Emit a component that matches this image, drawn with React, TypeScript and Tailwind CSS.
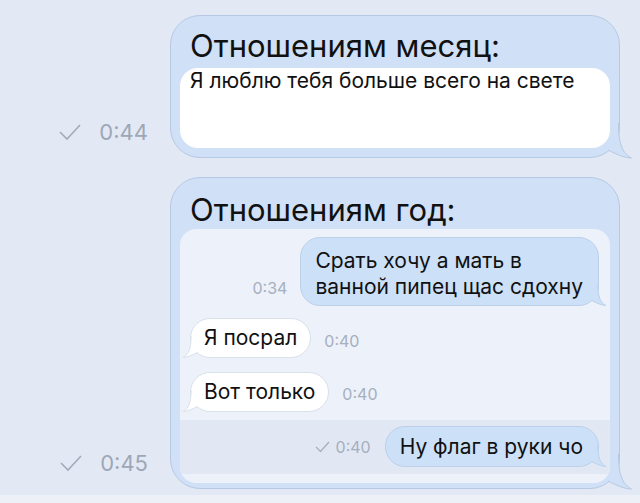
import React from 'react';

// bubble tail, drawn over the bottom corner of a bubble
const Tail: React.FC<{ side: 'left' | 'right'; size: 'big' | 'small'; fill: string; stroke: string }> = ({ side, size, fill, stroke }) => {
  const box =
    size === 'big'
      ? 'absolute -right-[13px] -bottom-[2px] w-[40px] h-[36px]'
      : side === 'right'
      ? 'absolute -right-[8px] -bottom-[1px] w-[24px] h-[22px]'
      : 'absolute -left-[8px] -bottom-[1px] w-[24px] h-[22px]';
  const flip = side === 'left' ? 'translate(40,0) scale(-1,1)' : undefined;
  return (
    <svg className={box} viewBox="0 0 40 36" preserveAspectRatio="none">
      <g transform={flip}>
        <path d="M26.5 0 C26.5 20 30 30 39.5 35 C33 35 26 32 16 27 L10 10 L20 0 Z" fill={fill} />
        <path d="M26.5 0 C26.5 20 30 30 39.5 35 C33 35 26 32 16 27" fill="none" stroke={stroke} strokeWidth={1} vectorEffect="non-scaling-stroke" />
      </g>
    </svg>
  );
};

const BigCheck = () => (
  <svg width="22" height="18" viewBox="0 0 22 18" fill="none">
    <path d="M1 9 L8 16 L21 2" stroke="#a3abb9" strokeWidth={1.6} />
  </svg>
);

const SmallCheck = () => (
  <svg width="15" height="12" viewBox="0 0 15 12" fill="none">
    <path d="M1 6 L5.5 10.5 L14 1" stroke="#a9b1be" strokeWidth={1.3} />
  </svg>
);

const Stamp: React.FC<{ time: string }> = ({ time }) => (
  <div className="flex items-center gap-[18px] text-[22px] leading-[26px] text-[#9ea7b6]">
    <BigCheck />
    <span>{time}</span>
  </div>
);

const SentBubble: React.FC<{ children: React.ReactNode; className?: string }> = ({ children, className }) => (
  <div className={`relative rounded-[20px] border border-[#bcd0ea] bg-[#cce0f7] ${className ?? ''}`}>
    <Tail side="right" size="small" fill="#cce0f7" stroke="#bcd0ea" />
    <span className="relative">{children}</span>
  </div>
);

const InBubble: React.FC<{ children: React.ReactNode }> = ({ children }) => (
  <div className="relative h-[40px] rounded-[20px] border border-[#d9e0ea] bg-white px-[13px] leading-[38px]">
    <Tail side="left" size="small" fill="#ffffff" stroke="#d9e0ea" />
    <span className="relative">{children}</span>
  </div>
);

export default function App() {
  return (
    <div className="w-[640px] h-[503px] overflow-hidden bg-[#e3e9f4] flex flex-col font-['Inter',sans-serif] text-[#111]">
      {/* month */}
      <div className="flex mt-[15px]">
        <div className="w-[170px] shrink-0 flex justify-end items-end pr-[22px] pb-[13px]">
          <Stamp time="0:44" />
        </div>
        <div className="relative w-[450px] rounded-[30px] border border-[#b6c9e4] bg-[#cfe0f7] px-[9px] pb-[9px]">
          <Tail side="right" size="big" fill="#cfe0f7" stroke="#b6c9e4" />
          <div className="relative pt-[12px] pl-[10px] text-[31px] leading-[36px]">Отношениям месяц:</div>
          <div className="relative mt-[4px] h-[80px] rounded-[18px] bg-white pl-[10px] pt-[1px] text-[21px] leading-[24px]">
            Я люблю тебя больше всего на свете
          </div>
        </div>
      </div>

      {/* year */}
      <div className="flex mt-[19px]">
        <div className="w-[170px] shrink-0 flex justify-end items-end pr-[22px] pb-[13px]">
          <Stamp time="0:45" />
        </div>
        <div className="relative w-[450px] rounded-[30px] border border-[#b6c9e4] bg-[#cfe0f7] px-[9px] pb-[5px]">
          <Tail side="right" size="big" fill="#cfe0f7" stroke="#b6c9e4" />
          <div className="relative pt-[14px] pl-[10px] text-[31px] leading-[36px]">Отношениям год:</div>
          <div className="relative mt-[1px] rounded-[16px] bg-[#ecf1fa] pt-[8px] pb-[9px] overflow-hidden text-[21px]">
            <div className="flex justify-end items-end gap-[13px] pr-[11px]">
              <span className="mb-[10px] text-[16px] leading-[16px] text-[#a6afbe]">0:34</span>
              <SentBubble className="pl-[14px] pr-[15px] pt-[10px] pb-[5px] leading-[26px]">
                Срать хочу а мать в<br />ванной пипец щас сдохну
              </SentBubble>
            </div>
            <div className="flex items-end gap-[13px] pl-[10px] mt-[12px]">
              <InBubble>Я посрал</InBubble>
              <span className="mb-[9px] text-[16px] leading-[16px] text-[#a6afbe]">0:40</span>
            </div>
            <div className="flex items-end gap-[13px] pl-[10px] mt-[14px]">
              <InBubble>Вот только</InBubble>
              <span className="mb-[10px] text-[16px] leading-[16px] text-[#a6afbe]">0:40</span>
            </div>
            <div className="mt-[8px] bg-[#e1e8f4] flex justify-end items-center gap-[14px] pr-[11px] pt-[6px] pb-[7px]">
              <div className="flex items-center gap-[6px] text-[16px] leading-[16px] text-[#a6afbe]">
                <SmallCheck />
                <span>0:40</span>
              </div>
              <SentBubble className="h-[41px] pl-[14px] pr-[15px] leading-[39px]">Ну флаг в руки чо</SentBubble>
            </div>
          </div>
        </div>
      </div>

      <div className="mt-auto h-[8px] bg-[#edf1f7]" />
    </div>
  );
}
